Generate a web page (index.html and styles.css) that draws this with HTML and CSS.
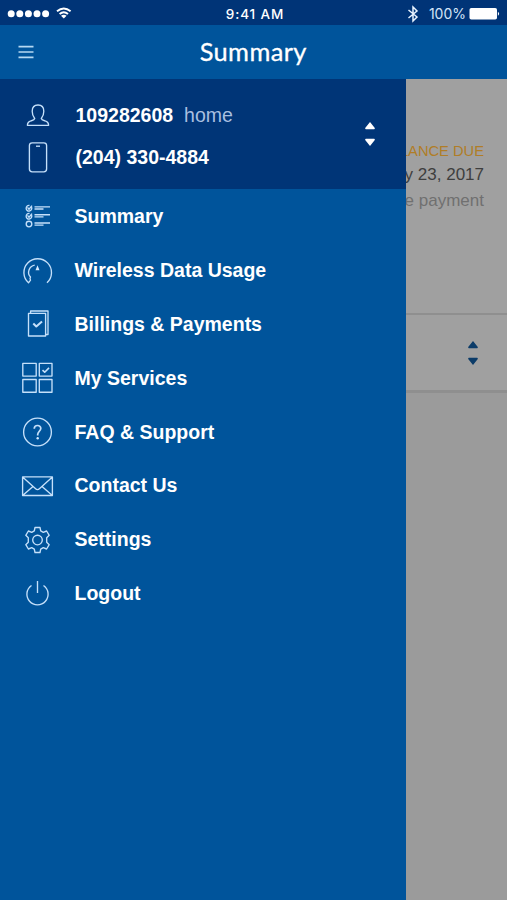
FILE: index.html
```html
<!DOCTYPE html>
<html lang="en">
<head>
<meta charset="utf-8">
<title>Summary</title>
<link rel="stylesheet" href="styles.css">
</head>
<body>
<div class="app">
  <div class="status">
    <svg class="signal" width="72" height="20" viewBox="0 0 72 20" fill="#fff">
      <circle cx="4.2" cy="9.7" r="3.5"/><circle cx="12.8" cy="9.7" r="3.5"/><circle cx="21.4" cy="9.7" r="3.5"/><circle cx="30" cy="9.7" r="3.5"/><circle cx="38.6" cy="9.7" r="3.5"/>
      <g fill="none" stroke="#fff" stroke-width="1.9"><path d="M50 7.3Q56.8 1.5 63.6 7.3M52.6 10Q56.8 6.3 61 10"/></g>
      <path d="M54 11.7Q56.8 9.8 59.6 11.7L56.8 14.6Z"/>
    </svg>
    <span class="time">9:41 AM</span>
    <div class="power">
      <svg width="12" height="18" viewBox="0 0 12 18" fill="none" stroke="#e8f3ff" stroke-width="1.5"><path d="M1.5 5L10 12L6 16V2L10 6L1.5 13"/></svg>
      <span class="percent">100%</span>
      <svg width="32" height="14" viewBox="0 0 32 14"><rect x=".5" y="1" width="27.5" height="11.5" rx="1.8" fill="#fff"/><path d="M28.9 4.8Q31.4 6.7 28.9 8.8Z" fill="#fff"/></svg>
    </div>
  </div>
  <header class="header">
    <svg class="burger" width="16" height="14" viewBox="0 0 16 14" stroke="#b5d8f2" stroke-width="1.7"><path d="M.5 1.7H15.5M.5 7H15.5M.5 12.3H15.5"/></svg>
    <h1 class="title">Summary</h1>
  </header>
  <div class="body">
    <nav class="drawer">
      <div class="account">
        <div class="lines">
          <div class="line">
            <svg class="icon" width="35" height="35" viewBox="0 0 35 35"><path d="M14.7 20.5C13 18.5 12.2 16 12.2 13.2C12.2 9.4 14.4 7 18 7S23.8 9.4 23.8 13.2C23.8 16 23 18.5 21.3 20.5C21.6 22 23 22.3 25 22.9C27.7 23.7 28.6 24.6 28.6 27.3H7.4C7.4 24.6 8.3 23.7 11 22.9C13 22.3 14.4 22 14.7 20.5Z"/></svg>
            <span class="number">109282608</span><span class="tag">home</span>
          </div>
          <div class="line">
            <svg class="icon" width="35" height="35" viewBox="0 0 35 35"><rect x="9.4" y="2.8" width="17.2" height="29" rx="2.8"/><path d="M16 6.2H20"/></svg>
            <span class="number">(204) 330-4884</span>
          </div>
        </div>
        <svg class="sort" width="12" height="26" viewBox="0 0 12 26"><path d="M6 1L10.8 7Q11 8.2 10 8.2H2Q1 8.2 1.2 7ZM6 25L10.8 19Q11 17.8 10 17.8H2Q1 17.8 1.2 19Z"/></svg>
      </div>
      <ul class="menu">
        <li class="item"><svg class="icon" width="35" height="35" viewBox="0 0 35 35"><path d="M14.5 7.9H30M14.5 10H23.5M14.5 15.7H30M14.5 17.8H23.5M14.5 24H30M14.5 26.1H23.5M11.6 8.3A2.8 2.8 0 1 1 9.5 6.5M11.6 16.3A2.8 2.8 0 1 1 9.5 14.5M7.5 8.4L9 10.2L12 6.6M7.5 16.4L9 18.2L12 14.6"/><circle cx="9" cy="25" r="2.8"/></svg><span>Summary</span></li>
        <li class="item"><svg class="icon" width="35" height="35" viewBox="0 0 35 35"><path d="M27 29.7A13.8 13.8 0 1 0 8.5 29.8L10.5 27.2Q9.5 25.3 10.5 24C6.6 20 9 13.2 14.7 12.1"/><path d="M17.5 12.2L19.5 17.2H15.5Z" fill="#d4eaff" stroke="none"/></svg><span>Wireless Data Usage</span></li>
        <li class="item"><svg class="icon" width="35" height="35" viewBox="0 0 35 35"><path d="M8.5 7.4H25.6V30H8.5ZM10.6 7V5H28V28.5H26"/><path d="M13.3 17.5L16.3 20.5L22 15.4" stroke-width="2"/></svg><span>Billings &amp; Payments</span></li>
        <li class="item"><svg class="icon" width="35" height="35" viewBox="0 0 35 35"><path d="M2.8 3.4H16.2V16.1H2.8ZM19.3 3.4H32V16.1H19.3ZM2.8 19.5H16.2V32.2H2.8ZM19.3 19.5H32V32.2H19.3Z"/><path d="M22.5 10.2L24.7 12.2L29 7.9" stroke-width="1.6"/></svg><span>My Services</span></li>
        <li class="item"><svg class="icon" width="35" height="35" viewBox="0 0 35 35"><circle cx="17.5" cy="18" r="13.9"/><path d="M14.2 14.7C14.4 10.3 21 10.7 20.8 14.5C20.7 17 17.7 17.7 17.7 20.6V21.4" stroke-width="1.7"/><circle cx="17.7" cy="24.3" r="1.2" fill="#d4eaff" stroke="none"/></svg><span>FAQ &amp; Support</span></li>
        <li class="item"><svg class="icon" width="35" height="35" viewBox="0 0 35 35"><path d="M2.6 8.9H32.4V27.5H2.6ZM2.6 8.9L15.6 20.8Q17.5 22.5 19.4 20.8L32.4 8.9M2.6 27.5L13 18.5M32.4 27.5L22 18.5"/></svg><span>Contact Us</span></li>
        <li class="item"><svg class="icon" width="35" height="35" viewBox="0 0 35 35"><path d="M15 5.5H20L20.7 8.9L23.3 10.3L26.6 9L29.2 13.3L26.7 15.7V20.3L29.2 22.7L26.6 27L23.3 25.7L20.7 27.2L20 30.5H15L14.3 27.2L11.7 25.7L8.4 27L5.8 22.7L8.3 20.3V15.7L5.8 13.3L8.4 9L11.7 10.3L14.3 8.9Z"/><circle cx="17.5" cy="18" r="4.8"/></svg><span>Settings</span></li>
        <li class="item"><svg class="icon" width="35" height="35" viewBox="0 0 35 35"><path d="M11.5 10.5A10.6 10.6 0 1 0 23.5 10.5M17.5 6V18"/></svg><span>Logout</span></li>
      </ul>
    </nav>
    <main class="page">
      <section class="bill">
        <div class="due">BALANCE DUE</div>
        <div class="date">May 23, 2017</div>
        <div class="pay">Make payment</div>
      </section>
      <section class="picker">
        <svg class="sort dark" width="12" height="26" viewBox="0 0 12 26"><path d="M6 1L10.8 7Q11 8.2 10 8.2H2Q1 8.2 1.2 7ZM6 25L10.8 19Q11 17.8 10 17.8H2Q1 17.8 1.2 19Z"/></svg>
      </section>
    </main>
  </div>
</div>
</body>
</html>
```
FILE: styles.css
```css
* { box-sizing: border-box; }
body { margin: 0; font-family: "Liberation Sans", Arial, sans-serif; color: #fff; }
.app { width: 507px; height: 900px; display: flex; flex-direction: column; overflow: hidden; background: #9b9b9b; }
svg { display: block; flex: none; }

.status { height: 25px; flex: none; display: grid; grid-template-columns: 1fr auto 1fr; align-items: center; padding: 2px 6px 0 7px; background: #003477; }
.signal { margin-top: 1px; }
.time { font: 500 13.5px/20px Inter, sans-serif; letter-spacing: 0.9px; margin: 0 0 0 2px; }
.power { display: flex; align-items: center; justify-content: flex-end; }
.percent { font: 14px/18px Inter, sans-serif; color: #d3e4f8; margin: 0 3px 0 10px; }

.header { height: 54px; flex: none; display: grid; grid-template-columns: 1fr auto 1fr; align-items: center; padding: 0 18px 0 17.5px; background: #00549b; }
.title { margin: 0 0 3px; font: 400 25.4px/30px Lato, sans-serif; letter-spacing: 0.4px; -webkit-text-stroke: 0.3px #fff; }

.body { flex: 1; display: flex; min-height: 0; }
.drawer { width: 405.5px; flex: none; background: #00549b; }
.account { height: 110px; display: flex; justify-content: space-between; padding: 15px 29.5px 0 20px; background: #003577; }
.lines { display: flex; flex-direction: column; }
.line { height: 42.5px; display: flex; align-items: center; font-size: 19.5px; }
.number { margin-left: 20.5px; font-weight: 700; }
.tag { margin-left: 11px; color: #a9bfe0; }
.sort { margin-top: 27px; fill: #fff; }
.icon { fill: none; stroke: #c5e0fa; stroke-width: 1.35; stroke-linejoin: round; }

.menu { list-style: none; margin: 0; padding: 1px 0 0 20px; }
.item { height: 53.8px; display: flex; align-items: center; gap: 19.5px; font-size: 19.5px; font-weight: 700; }
.item .icon { margin-bottom: 1px; }

.page { flex: 1; min-width: 0; overflow: hidden; color: #3e3e3e; }
.bill { height: 236px; padding: 61px 23px 0 0; display: flex; flex-direction: column; align-items: flex-end; white-space: nowrap; background: #a0a0a0; border-bottom: 2px solid #8f8f8f; font-size: 17px; line-height: 26px; }
.due { font-size: 14.7px; line-height: 22px; color: #b07d27; }
.pay { color: #707070; }
.picker { height: 78px; display: flex; justify-content: flex-end; padding-right: 28px; background: #a0a0a0; border-bottom: 3px solid #8f8f8f; }
.sort.dark { margin-top: 25px; fill: #0b3b68; }
```
